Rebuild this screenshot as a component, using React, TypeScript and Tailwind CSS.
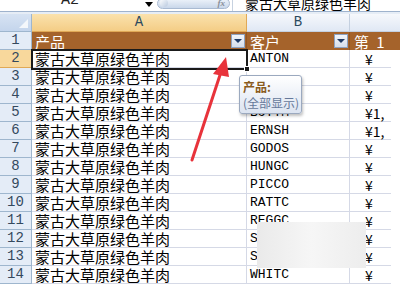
import React from "react";

const names = ["ANTON", "", "", "BOTTM", "ERNSH", "GODOS", "HUNGC", "PICCO", "RATTC", "REGGC", "SAVEA", "SEVES", "WHITC"];
const cvals = ["¥", "¥", "¥", "¥1,", "¥1,", "¥", "¥", "¥", "¥", "¥", "¥", "¥", "¥"];

const Drop = () => (
  <div className="w-[14px] h-[14px] border border-[#8ea3c2] bg-gradient-to-b from-[#f2f5fa] to-[#d6dfec] flex items-center justify-center">
    <div className="w-0 h-0 border-l-[4px] border-r-[4px] border-t-[4px] border-l-transparent border-r-transparent border-t-[#1f3b66]" />
  </div>
);

export default function App() {
  const cjk = { fontFamily: '"Noto Sans CJK SC", "Noto Sans", sans-serif' };
  const mono = { fontFamily: '"Liberation Mono", monospace' };
  return (
    <div className="w-[400px] h-[300px] bg-white overflow-hidden relative">
      {/* formula bar */}
      <div className="flex h-[11px] bg-white overflow-hidden">
        <div className="w-[140px] flex justify-center items-end">
          <span className="text-[15px] leading-[15px] text-[#222] mb-[1px] translate-y-[-2px]" style={mono}>A2</span>
        </div>
        <div className="w-[17px] flex items-start pt-[2px]">
          <div className="w-0 h-0 border-l-[4px] border-r-[4px] border-t-[5px] border-l-transparent border-r-transparent border-t-black ml-[5px]" />
        </div>
        <div className="w-[73px] h-[11px] -mt-[2px] rounded-full border border-[#a9bad2] bg-gradient-to-b from-[#eef3fa] to-[#c9d7ea] flex items-center justify-end pr-[4px] relative">
          <div className="absolute left-[2px] top-[0px] w-[8px] h-[8px] rounded-full bg-gradient-to-br from-white to-[#b9c9df]" />
          <span className="text-[9px] italic font-bold text-[#8a8f99] leading-none" style={{ fontFamily: '"Liberation Serif", serif' }}>fx</span>
        </div>
        <div className="w-[2px]" />
        <div className="w-[1px] bg-[#c7d2e0]" />
        <div className="flex-1 pl-[12px] flex items-end">
          <span className="text-[14px] leading-[14px] text-black translate-y-[-1px]" style={cjk}>蒙古大草原绿色羊肉</span>
        </div>
      </div>
      <div className="h-[1px] bg-[#9fb3cd]" />
      <div className="h-[2px] bg-[#e6edf6]" />
      {/* column headers */}
      <div className="flex h-[18px]">
        <div className="w-[32px] border-r border-b border-[#9eb6ce] bg-gradient-to-b from-[#d7e3f3] to-[#c4d5ec] relative">
          <div className="absolute right-[3px] bottom-[3px] w-0 h-0" style={{ borderBottom: "9px solid #f4f7fb", borderLeft: "9px solid transparent" }} />
        </div>
        <div className="w-[215px] border-r border-b border-[#e0a957] bg-gradient-to-b from-[#fae2ad] to-[#f4cd86] flex items-center justify-center">
          <span className="text-[14px] text-[#2b4a5e]" style={mono}>A</span>
        </div>
        <div className="w-[103px] border-r border-b border-[#c4d0e0] bg-gradient-to-b from-[#f6f8fc] to-[#e0e8f4] flex items-center justify-center">
          <span className="text-[14px] text-[#2b4a5e]" style={mono}>B</span>
        </div>
        <div className="flex-1 border-b border-[#c4d0e0] bg-gradient-to-b from-[#f6f8fc] to-[#e0e8f4]" />
      </div>
      {/* row 1 */}
      <div className="flex h-[18px]">
        <div className="w-[32px] border-r border-b border-[#9eb6ce] bg-[#e4ecf7] flex items-center justify-center">
          <span className="text-[14px] text-[#34495e]" style={mono}>1</span>
        </div>
        <div className="w-[215px] bg-[#a5632b] border-r border-[#8f5524] flex items-center justify-between pl-[3px] pr-[1px]">
          <span className="text-[15px] leading-none text-white" style={cjk}>产品</span>
          <Drop />
        </div>
        <div className="w-[103px] bg-[#a5632b] border-r border-[#8f5524] flex items-center justify-between pl-[3px] pr-[1px]">
          <span className="text-[15px] leading-none text-white" style={cjk}>客户</span>
          <Drop />
        </div>
        <div className="flex-1 bg-[#a5632b] flex items-center pl-[4px]">
          <span className="text-[15px] leading-none text-white whitespace-pre [word-spacing:4px]" style={cjk}>第 1</span>
        </div>
      </div>
      {/* data rows */}
      {names.map((n, i) => {
        const sel = i === 0;
        return (
          <div key={i} className="flex h-[18px]">
            <div className={`w-[32px] border-r border-b flex items-center justify-center ${sel ? "bg-[#f8d89c] border-[#e0a957]" : "bg-[#e4ecf7] border-[#9eb6ce]"}`}>
              <span className="text-[14px] text-[#34495e]" style={mono}>{i + 2}</span>
            </div>
            <div className="w-[215px] border-r border-b border-[#d5d9e6] flex items-center pl-[3px]">
              <span className="text-[15px] leading-none text-black" style={cjk}>蒙古大草原绿色羊肉</span>
            </div>
            <div className="w-[103px] border-r border-b border-[#d5d9e6] flex items-center pl-[3px]">
              <span className="text-[13px] leading-none text-black" style={mono}>{n}</span>
            </div>
            <div className="w-[41px] border-b border-[#d5d9e6] flex items-center pl-[15px]">
              <span className="text-[14px] leading-none text-black whitespace-nowrap" style={cjk}>{cvals[i]}</span>
            </div>
          </div>
        );
      })}

      {/* selection */}
      <div className="absolute left-[31px] top-[49px] w-[217px] h-[21px] border-2 border-[#1a1a1a]" />
      <div className="absolute left-[244px] top-[66px] w-[6px] h-[6px] bg-[#1a1a1a] border border-white" />

      {/* tooltip */}
      <div className="absolute left-[239px] top-[75px] w-[63px] h-[39px] rounded-[3px] border border-[#9ba9bf] bg-gradient-to-b from-white to-[#dce4f1] shadow-[1px_2px_3px_rgba(0,0,0,0.25)] pl-[3px] pt-[3px]">
        <div className="text-[12px] leading-[15px] font-bold text-[#8a5b1c]" style={cjk}>产品:</div>
        <div className="text-[12px] leading-[17px] text-[#65789a] whitespace-nowrap" style={cjk}>(全部显示)</div>
      </div>

      {/* obscured block */}
      <div className="absolute left-[257px] top-[222px] w-[109px] h-[46px] bg-gradient-to-r from-[#eaeaea] via-[#f6f6f6] to-[#ededed]" />

      {/* red arrow */}
      <svg className="absolute left-0 top-0" width="400" height="300">
        <line x1="192" y1="160" x2="221" y2="72" stroke="#e8333b" strokeWidth="3" strokeLinecap="round" />
        <polygon points="226,57 213,74 229,77" fill="#e8333b" />
      </svg>
    </div>
  );
}
